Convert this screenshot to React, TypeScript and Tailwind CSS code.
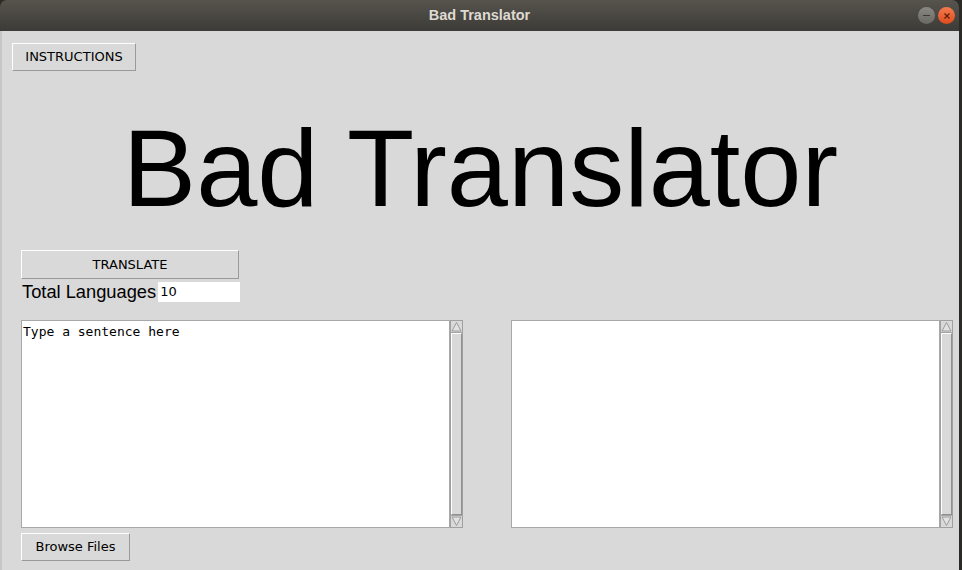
import React from "react";

const ui = { fontFamily: '"DejaVu Sans", sans-serif' };
const helv = { fontFamily: '"Liberation Sans", Arial, sans-serif' };
const mono = { fontFamily: '"DejaVu Sans Mono", "Liberation Mono", monospace' };

function Arrow({ up }: { up?: boolean }) {
  return (
    <div className="h-[12px] w-full border-b border-[#a6a6a6] last:border-b-0 last:border-t flex items-center justify-center">
      <svg width="11" height="11" viewBox="0 0 11 11">
        {up ? (
          <polygon points="5.5,1.5 10,10 1,10" fill="#e2e2e2" stroke="#9c9c9c" strokeWidth="1" />
        ) : (
          <polygon points="1,1 10,1 5.5,9.5" fill="#e2e2e2" stroke="#9c9c9c" strokeWidth="1" />
        )}
      </svg>
    </div>
  );
}

function Scrollbar() {
  return (
    <div className="w-[13px] h-full border border-[#a0a0a0] bg-[#d9d9d9] flex flex-col">
      <Arrow up />
      <div className="flex-1 border-t border-l border-white border-r border-b border-r-[#8f8f8f] border-b-[#8f8f8f] bg-[#d9d9d9]" />
      <Arrow />
    </div>
  );
}

function TextPane({ text }: { text?: string }) {
  return (
    <div className="flex h-[208px]">
      <div
        className="w-[429px] h-full bg-white border border-[#a8a8a8] px-[1px] pt-[2px] text-[13px] leading-[17px] text-black"
        style={mono}
      >
        {text}
      </div>
      <Scrollbar />
    </div>
  );
}

function TkButton({ label, className }: { label: string; className: string }) {
  return (
    <div
      className={`flex items-center justify-center bg-[#d9d9d9] border border-t-white border-l-white border-r-[#9a9a9a] border-b-[#9a9a9a] text-[13px] text-black ${className}`}
      style={ui}
    >
      {label}
    </div>
  );
}

export default function App() {
  return (
    <div className="w-[962px] h-[570px] bg-[#2b2a27] overflow-hidden">
      <div className="w-[959px] h-full flex flex-col rounded-t-[7px] overflow-hidden">
        {/* title bar */}
        <div className="h-[31px] shrink-0 relative flex items-center justify-center bg-gradient-to-b from-[#57544e] to-[#3d3b37]">
          <span className="text-[14.5px] font-bold text-[#dedad2]" style={helv}>
            Bad Translator
          </span>
          <div className="absolute right-[4px] top-[7px] flex gap-[3px]">
            <div className="w-[17px] h-[17px] rounded-full bg-gradient-to-b from-[#8a8883] to-[#6b6964] flex items-center justify-center">
              <div className="w-[7px] h-[1.5px] bg-[#3a3935]" />
            </div>
            <div className="w-[17px] h-[17px] rounded-full bg-gradient-to-b from-[#f47a4c] to-[#df4a1a] flex items-center justify-center">
              <svg width="8" height="8" viewBox="0 0 8 8">
                <path d="M1.5 1.5 L6.5 6.5 M6.5 1.5 L1.5 6.5" stroke="#5a1d08" strokeWidth="1.2" />
              </svg>
            </div>
          </div>
        </div>

        {/* content */}
        <div className="flex-1 bg-[#d9d9d9] border-l-[2px] border-[#c6c6c6] flex flex-col">
          <TkButton label="INSTRUCTIONS" className="ml-[10px] mt-[12px] w-[124px] h-[28px]" />

          <h1
            className="mt-[43px] h-[108px] text-[110px] leading-[108px] text-black text-center"
            style={helv}
          >
            Bad Translator
          </h1>

          <div className="pl-[19px] flex flex-col">
            <TkButton label="TRANSLATE" className="mt-[28px] w-[218px] h-[29px]" />
            <div className="flex items-center mt-[1px] h-[23px]">
              <span className="text-[18.3px] text-black pl-[1px]" style={helv}>
                Total Languages
              </span>
              <div
                className="ml-[2px] w-[82px] h-[20px] bg-white text-[13px] leading-[20px] pl-[2px] text-black"
                style={ui}
              >
                10
              </div>
            </div>

            <div className="flex gap-[48px] mt-[17px]">
              <TextPane text="Type a sentence here" />
              <TextPane />
            </div>

            <TkButton label="Browse Files" className="mt-[5px] w-[109px] h-[28px]" />
          </div>
        </div>
      </div>
    </div>
  );
}
